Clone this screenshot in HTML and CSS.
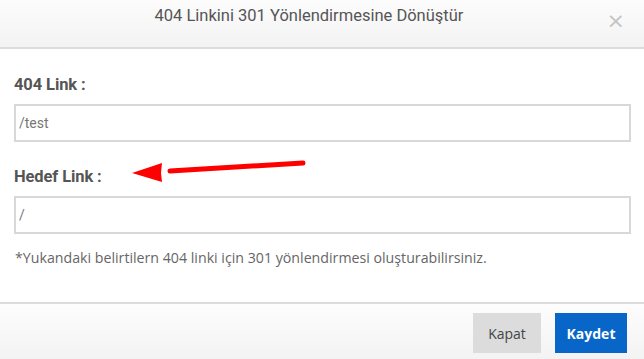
FILE: index.html
```html
<!DOCTYPE html>
<html lang="tr">
<head>
    <meta charset="UTF-8">
    <meta name="viewport" content="width=device-width, initial-scale=1.0">
    <title>404 Linkini 301 Yönlendirmesine Dönüştür</title>
    <link rel="stylesheet" href="styles.css">
</head>
<body>
    <div class="modal">
        <div class="modal-header">
            <h4>404 Linkini 301 Yönlendirmesine Dönüştür</h4>
            <span class="close">&times;</span>
        </div>

        <div class="modal-body">
            <label for="from">404 Link :</label>
            <input type="text" id="from" value="/test">

            <label for="to" class="second">Hedef Link :</label>
            <input type="text" id="to" value="/">

            <p class="hint">*Yukandaki belirtilern 404 linki için 301 yönlendirmesi oluşturabilirsiniz.</p>

            <svg class="arrow" width="180" height="30" viewBox="0 0 180 30">
                <path d="M173 6 L40 14" stroke="#f00" stroke-width="5" stroke-linecap="round" fill="none"/>
                <path d="M2 16 L32 6 L31 16 L32 25 Z" fill="#f00"/>
            </svg>
        </div>

        <div class="modal-footer">
            <button class="btn btn-gray">Kapat</button>
            <button class="btn btn-blue">Kaydet</button>
        </div>
    </div>
</body>
</html>
```

FILE: styles.css
```css
body {
    margin: 0;
    background-color: #fff;
    font-family: 'Roboto', 'Liberation Sans', sans-serif;
    color: #555;
}

.modal {
    width: 644px;
    height: 359px;
    display: flex;
    flex-direction: column;
    overflow: hidden;
}

.modal-header {
    height: 47px;
    border-bottom: 2px solid #dcdcdc;
    background: linear-gradient(#fcfcfc, #f3f3f3);
    display: flex;
    align-items: center;
    justify-content: center;
    position: relative;
}

.modal-header h4 {
    margin: 0 26px 17px 0;
    font-size: 16.5px;
    font-weight: normal;
    color: #555;
}

.close {
    position: absolute;
    right: 19px;
    top: 8px;
    font-size: 22px;
    color: #c4c4c4;
    font-family: 'DejaVu Sans', sans-serif;
}

.modal-body {
    position: relative;
    padding: 26px 13px 0 14px;
    flex: 1;
}

label {
    display: block;
    font-weight: bold;
    font-size: 16.5px;
    color: #555;
    margin-bottom: 10px;
    letter-spacing: -0.1px;
}

label.second {
    margin-top: 25px;
}

input {
    display: block;
    width: 100%;
    height: 38px;
    box-sizing: border-box;
    border: 2px solid #d8d8d8;
    padding: 0 3px;
    font-family: 'Roboto', 'Liberation Sans', sans-serif;
    font-size: 14px;
    color: #777;
    outline: none;
}

.hint {
    margin: 14px 0 0 1px;
    font-family: 'Open Sans', sans-serif;
    font-size: 14.2px;
    color: #666;
}

.arrow {
    position: absolute;
    left: 130px;
    top: 108px;
}

.modal-footer {
    height: 57px;
    box-sizing: border-box;
    border-top: 2px solid #dcdcdc;
    background: linear-gradient(#fdfdfd, #f3f3f3);
    display: flex;
    justify-content: flex-end;
    align-items: flex-start;
    gap: 14px;
    padding: 9px 17px 0 0;
    flex-shrink: 0;
}

.btn {
    height: 40px;
    border: none;
    font-family: 'Open Sans', sans-serif;
    font-size: 14px;
    cursor: pointer;
}

.btn-gray {
    width: 68px;
    background-color: #dcdcdc;
    color: #444;
}

.btn-blue {
    width: 72px;
    background-color: #0766c8;
    color: #fff;
    font-weight: bold;
}
```
